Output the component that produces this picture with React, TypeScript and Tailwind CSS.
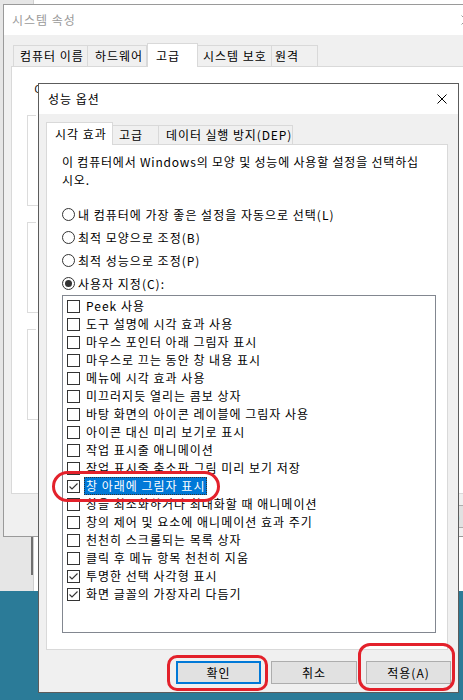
import React from "react";

const items: [string, boolean][] = [
  ["Peek 사용", false],
  ["도구 설명에 시각 효과 사용", false],
  ["마우스 포인터 아래 그림자 표시", false],
  ["마우스로 끄는 동안 창 내용 표시", false],
  ["메뉴에 시각 효과 사용", false],
  ["미끄러지듯 열리는 콤보 상자", false],
  ["바탕 화면의 아이콘 레이블에 그림자 사용", false],
  ["아이콘 대신 미리 보기로 표시", false],
  ["작업 표시줄 애니메이션", false],
  ["작업 표시줄 축소판 그림 미리 보기 저장", false],
  ["창 아래에 그림자 표시", true],
  ["창을 최소화하거나 최대화할 때 애니메이션", false],
  ["창의 제어 및 요소에 애니메이션 효과 주기", false],
  ["천천히 스크롤되는 목록 상자", false],
  ["클릭 후 메뉴 항목 천천히 지움", false],
  ["투명한 선택 사각형 표시", true],
  ["화면 글꼴의 가장자리 다듬기", true],
];

const SELECTED = 10;

function CloseX({ color }: { color: string }) {
  return (
    <svg width="10" height="10" viewBox="0 0 10 10" className="shrink-0">
      <path d="M0.5 0.5 L9.5 9.5 M9.5 0.5 L0.5 9.5" stroke={color} strokeWidth="1" fill="none" />
    </svg>
  );
}

function Radio({ checked, label }: { checked?: boolean; label: string }) {
  return (
    <div className="h-[23px] flex items-center">
      <span className="w-[13px] h-[13px] rounded-full border border-[#333333] bg-white flex items-center justify-center shrink-0">
        {checked && <span className="w-[7px] h-[7px] rounded-full bg-[#333333]" />}
      </span>
      <span className="ml-[3px] whitespace-nowrap">{label}</span>
    </div>
  );
}

function CheckBox({ checked }: { checked: boolean }) {
  return (
    <span className="w-[13px] h-[13px] border border-[#333333] bg-white flex items-center justify-center shrink-0">
      {checked && (
        <svg width="11" height="11" viewBox="0 0 11 11">
          <path d="M1.5 5.5 L4 8 L9.5 2.5" stroke="#333333" strokeWidth="1.1" fill="none" />
        </svg>
      )}
    </span>
  );
}

export default function App() {
  return (
    <div className="relative w-[463px] h-[700px] overflow-hidden bg-[#2b7b98] text-[12px] tracking-[1px] text-black font-['Noto_Sans_CJK_KR',sans-serif]">
      {/* desktop windows behind */}
      <div className="absolute left-0 top-0 w-[463px] h-[591px] bg-[#e6e6e6]" />
      <div className="absolute left-[33px] top-0 w-[430px] h-[591px] bg-white border-l border-[#d0d0d0]" />
      <div className="absolute left-[31px] top-[537px] w-[2px] h-[38px] bg-[#707070]" />

      {/* back window: 시스템 속성 */}
      <div className="absolute left-[3px] top-[4px] w-[482px] h-[533px] border border-[#9a9a9a] bg-[#f0f0f0] flex flex-col">
        <div className="h-[30px] shrink-0 bg-white flex items-center justify-between pl-[8px] pr-[13px]">
          <span className="text-[#9a9a9a] leading-[18px]">시스템 속성</span>
          <CloseX color="#9a9a9a" />
        </div>
        <div className="flex flex-col px-[7px] pt-[8px]">
          <div className="flex items-end h-[23px] pl-[2px]">
            <div className="w-[75px] h-[21px] border border-b-0 border-[#d9d9d9] pl-[6px] flex items-center leading-[18px] whitespace-nowrap">컴퓨터 이름</div>
            <div className="w-[59px] h-[21px] border border-b-0 border-l-0 border-[#d9d9d9] pl-[7px] flex items-center leading-[18px] whitespace-nowrap">하드웨어</div>
            <div className="relative z-10 -mb-px w-[51px] h-[24px] border border-b-0 border-[#d9d9d9] bg-white pl-[8px] flex items-center leading-[18px] whitespace-nowrap">고급</div>
            <div className="w-[74px] h-[21px] border border-b-0 border-l-0 border-[#d9d9d9] pl-[5px] flex items-center leading-[18px] whitespace-nowrap">시스템 보호</div>
            <div className="w-[46px] h-[21px] border border-b-0 border-l-0 border-[#d9d9d9] pl-[3px] flex items-center leading-[18px] whitespace-nowrap">원격</div>
          </div>
          <div className="h-[428px] bg-white border border-[#d9d9d9] flex flex-col pl-[15px] pt-[14px]">
            <div className="ml-[7px] leading-[18px] whitespace-nowrap">이 내용을 변경하려면 관리자로 로그온해야 합니다.</div>
            {["성능", "사용자 프로필", "시작 및 복구"].map((t) => (
              <div key={t} className="relative w-[425px] h-[91px] border border-[#dcdcdc] mt-[16px]">
                <span className="absolute -top-[10px] left-[8px] bg-white px-[2px] leading-[18px] whitespace-nowrap">{t}</span>
              </div>
            ))}
          </div>
          <div className="flex justify-end gap-[9px] mt-[11px]">
            <div className="w-[75px] h-[23px] bg-[#e1e1e1] border border-[#adadad] flex items-center justify-center">확인</div>
            <div className="w-[75px] h-[23px] bg-[#e1e1e1] border border-[#adadad] flex items-center justify-center">취소</div>
            <div className="w-[75px] h-[23px] bg-[#e1e1e1] border border-[#adadad] flex items-center justify-center">적용(A)</div>
          </div>
        </div>
      </div>

      {/* front dialog: 성능 옵션 */}
      <div className="absolute left-[38px] top-[83px] w-[421px] h-[610px] border border-[#5c5c5c] bg-[#f0f0f0] flex flex-col">
        <div className="h-[30px] shrink-0 bg-white flex items-center justify-between pl-[9px] pr-[11px]">
          <span className="leading-[18px]">성능 옵션</span>
          <CloseX color="#000000" />
        </div>
        <div className="flex flex-col px-[7px] pt-[8px] pb-[8px]">
          <div className="flex items-end h-[22px]">
            <div className="relative z-10 -mb-px w-[67px] h-[23px] border border-b-0 border-[#d9d9d9] bg-white pl-[8px] flex items-center leading-[18px] whitespace-nowrap">시각 효과</div>
            <div className="w-[46px] h-[19px] border border-b-0 border-l-0 border-[#d9d9d9] pl-[6px] flex items-center leading-[18px] whitespace-nowrap">고급</div>
            <div className="w-[134px] h-[19px] border border-b-0 border-l-0 border-[#d9d9d9] pl-[7px] flex items-center leading-[18px] whitespace-nowrap tracking-[0.9px]">데이터 실행 방지(DEP)</div>
          </div>
          <div className="w-[402px] h-[506px] bg-white border border-[#d9d9d9] flex flex-col pl-[15px] pt-[8px]">
            <div className="leading-[18px] whitespace-nowrap tracking-[0.8px]">
              이 컴퓨터에서 Windows의 모양 및 성능에 사용할 설정을 선택하십
              <br />
              시오.
            </div>
            <div className="mt-[14px] flex flex-col">
              <Radio label="내 컴퓨터에 가장 좋은 설정을 자동으로 선택(L)" />
              <Radio label="최적 모양으로 조정(B)" />
              <Radio label="최적 성능으로 조정(P)" />
              <Radio checked label="사용자 지정(C):" />
            </div>
            <div className="w-[374px] h-[338px] border border-[#828790] bg-white flex flex-col pt-px">
              {items.map(([label, checked], i) => (
                <div key={label} className="h-[18px] flex items-center pl-[4px]">
                  <CheckBox checked={checked} />
                  <span
                    className={`ml-[4px] h-[18px] px-[1px] border flex items-center leading-[16px] whitespace-nowrap ${
                      i === SELECTED
                        ? "bg-[#0078d7] text-white border-dotted border-[#333333]"
                        : "border-transparent"
                    }`}
                  >
                    {label}
                  </span>
                </div>
              ))}
            </div>
          </div>
          <div className="flex justify-end mt-[11px]">
            <div className="w-[85px] h-[23px] bg-[#e1e1e1] border-2 border-[#0078d7] flex items-center justify-center">확인</div>
            <div className="ml-[10px] w-[86px] h-[23px] bg-[#e1e1e1] border border-[#adadad] flex items-center justify-center">취소</div>
            <div className="ml-[9px] w-[85px] h-[23px] bg-[#e1e1e1] border border-[#adadad] flex items-center justify-center">적용(A)</div>
          </div>
        </div>
      </div>

      {/* red annotation marks */}
      <div className="absolute left-[52px] top-[471px] w-[168px] h-[31px] border-[3px] border-[#e3212b] rounded-[16px]" />
      <div className="absolute left-[167px] top-[655px] w-[101px] h-[36px] border-[3px] border-[#e3212b] rounded-[10px]" />
      <div className="absolute left-[358px] top-[643px] w-[97px] h-[48px] border-[3px] border-[#e3212b] rounded-[12px]" />
    </div>
  );
}
